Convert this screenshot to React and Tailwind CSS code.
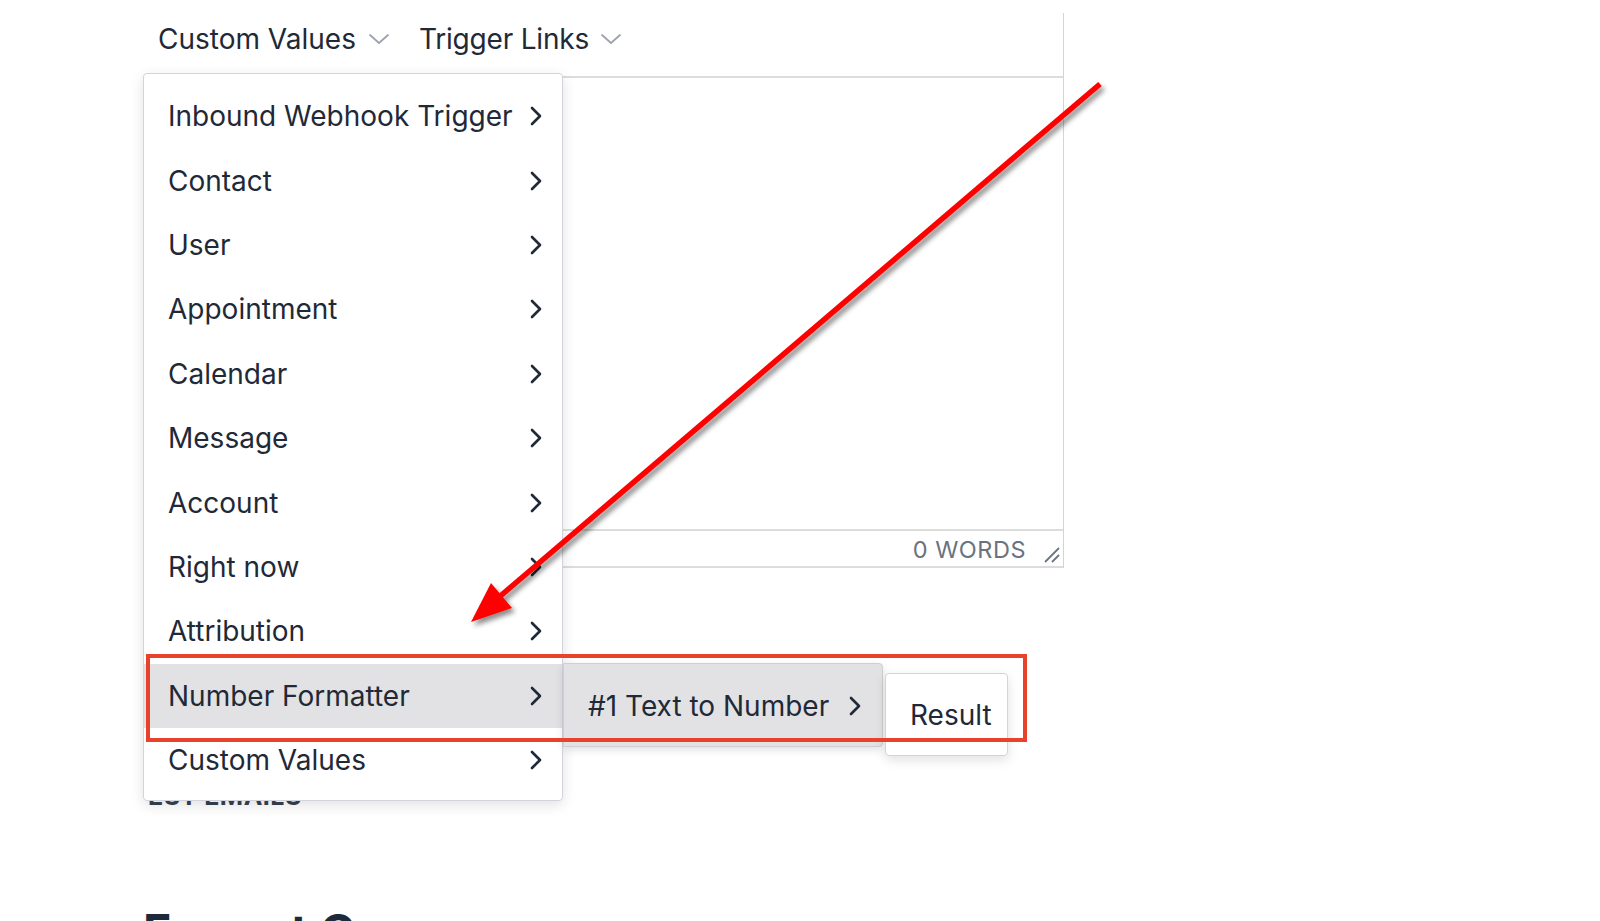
import React from "react";

const items = [
  "Inbound Webhook Trigger",
  "Contact",
  "User",
  "Appointment",
  "Calendar",
  "Message",
  "Account",
  "Right now",
  "Attribution",
  "Number Formatter",
  "Custom Values",
];

function ChevronRight() {
  return (
    <svg width="14" height="22" viewBox="0 0 14 22" fill="none">
      <polyline points="3,3 11,11 3,19" stroke="#1f2937" strokeWidth="2.6" strokeLinecap="round" strokeLinejoin="round" />
    </svg>
  );
}

function ChevronDown() {
  return (
    <svg width="22" height="14" viewBox="0 0 22 14" fill="none">
      <polyline points="2,3 11,11 20,3" stroke="#9ca3af" strokeWidth="1.8" strokeLinecap="round" strokeLinejoin="round" />
    </svg>
  );
}

export default function App() {
  return (
    <div
      className="relative w-[1600px] h-[921px] overflow-hidden bg-white text-[#1f2937]"
      style={{ fontFamily: "Inter, 'Noto Sans', sans-serif" }}
    >
      {/* page flow */}
      <div className="ml-[143px] pt-[13px] flex flex-col">
        {/* editor */}
        <div className="w-[921px] border-r border-[#d4d4d4] flex flex-col">
          <div className="h-[65px] border-b-2 border-[#dcdcdc] flex items-center pb-[12px] pl-[15px] gap-[29px] text-[28px]">
            <div className="flex items-center gap-[12px]">
              <span>Custom Values</span>
              <ChevronDown />
            </div>
            <div className="flex items-center gap-[11px]">
              <span className="tracking-[-0.2px]">Trigger Links</span>
              <ChevronDown />
            </div>
          </div>
          <div className="h-[451px]" />
          <div className="h-[39px] border-t-2 border-b-2 border-[#dcdcdc] flex items-center justify-end pt-[3px] pr-[2px] text-[23.5px] text-[#6b7280] tracking-[0.5px]">
            <span className="mr-[17px]">0 WORDS</span>
            <svg width="18" height="18" viewBox="0 0 18 18" className="mt-[10px]">
              <line x1="2" y1="16" x2="16" y2="2" stroke="#6b7280" strokeWidth="1.8" />
              <line x1="9" y1="16" x2="16" y2="9" stroke="#6b7280" strokeWidth="1.8" />
            </svg>
          </div>
        </div>

        <div className="ml-[5px] mt-[216px] h-[25px] text-[25px] leading-none font-bold text-[#374151] tracking-[0.5px]">
          EST EMAILS
        </div>

        <div className="mt-[99px] text-[48px] leading-none font-bold text-[#1e293b]">
          Format Currency
        </div>
      </div>

      {/* dropdown menu */}
      <div className="absolute left-[143px] top-[73px] w-[420px] bg-white border border-[#d1d5db] rounded-[4px] shadow-[0_4px_14px_rgba(0,0,0,0.12)] pt-[10px] pb-[8px]">
        {items.map((it, i) => (
          <div
            key={it}
            className={
              "h-[64.4px] flex items-center justify-between pl-[24px] pr-[19px] text-[28px] " +
              (i === 9 ? "bg-[#e2e2e4]" : "")
            }
          >
            <span>{it}</span>
            <ChevronRight />
          </div>
        ))}
      </div>

      {/* submenu 1 */}
      <div className="absolute left-[563px] top-[663px] w-[320px] h-[84px] bg-[#e2e2e4] border border-[#cfcfd2] rounded-r-[4px] shadow-[0_3px_8px_rgba(0,0,0,0.12)] flex items-center justify-between pl-[24px] pr-[20px] pt-[2px] text-[28px]">
        <span>#1 Text to Number</span>
        <ChevronRight />
      </div>

      {/* submenu 2 */}
      <div className="absolute left-[885px] top-[673px] w-[123px] h-[83px] bg-white border border-[#d1d5db] rounded-[4px] shadow-[0_4px_12px_rgba(0,0,0,0.12)] pl-[24px] pt-[27px] text-[28px] leading-none">
        Result
      </div>

      {/* annotation: red rectangle */}
      <div className="absolute left-[146px] top-[654px] w-[881px] h-[88px] border-[4px] border-[#e8412c]" />

      {/* annotation: arrow */}
      <svg className="absolute left-0 top-0 pointer-events-none" width="1600" height="921" viewBox="0 0 1600 921">
        <defs>
          <filter id="sh" x="-10%" y="-10%" width="120%" height="120%">
            <feDropShadow dx="3" dy="4" stdDeviation="2.5" floodColor="#000" floodOpacity="0.45" />
          </filter>
        </defs>
        <g filter="url(#sh)">
          <line x1="1100" y1="84" x2="498" y2="598" stroke="#ff0000" strokeWidth="5.5" />
          <polygon points="471,622 491,583 512,608" fill="#ff0000" />
        </g>
      </svg>
    </div>
  );
}
